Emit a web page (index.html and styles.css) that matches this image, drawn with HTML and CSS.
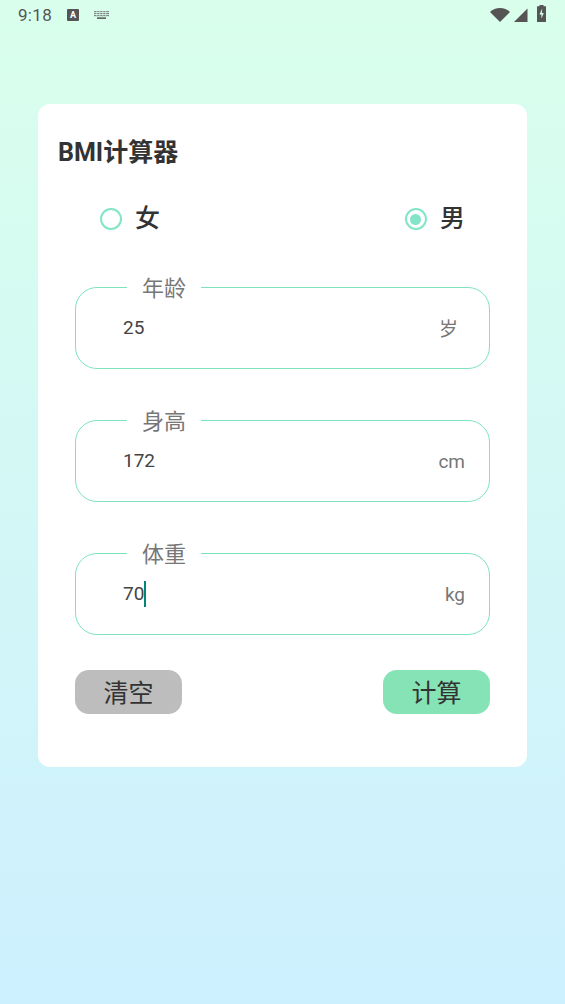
FILE: index.html
```html
<!DOCTYPE html>
<html lang="zh-CN">
<head>
    <meta charset="UTF-8">
    <meta name="viewport" content="width=device-width, initial-scale=1.0">
    <title>BMI计算器</title>
    <link rel="stylesheet" href="styles.css">
</head>
<body>
    <div class="status-bar">
        <div class="status-left">
            <span class="time">9:18</span>
            <span class="ime-badge">A</span>
            <svg class="keyboard-icon" width="15" height="8" viewBox="0 0 15 8">
                <g fill="#7d8a84">
                    <rect x="0" y="0" width="15" height="1.2"/>
                    <rect x="0" y="2" width="15" height="1.2"/>
                    <rect x="0" y="4" width="15" height="1.2"/>
                </g>
                <rect x="3" y="6.4" width="9" height="1.5" fill="#555"/>
                <g fill="#dafaee">
                    <rect x="2.5" y="0" width=".7" height="5.2"/>
                    <rect x="5.5" y="0" width=".7" height="5.2"/>
                    <rect x="8.5" y="0" width=".7" height="5.2"/>
                    <rect x="11.5" y="0" width=".7" height="5.2"/>
                </g>
            </svg>
        </div>
        <div class="status-right">
            <svg width="20" height="14" viewBox="0 0 20 14">
                <path d="M0 4C2.7 1.5 6.1 0 10 0s7.3 1.5 10 4L10 14z" fill="#555"/>
            </svg>
            <svg width="14" height="14" viewBox="0 0 14 14">
                <path d="M0 14L13.5 0.5V14z" fill="#555"/>
            </svg>
            <svg class="battery-icon" width="9" height="17" viewBox="0 0 9 17">
                <path d="M2.5 0h4v1.2H9V17H0V1.2h2.5z" fill="#555"/>
                <path d="M5.2 3.5L2.4 9.6h2v4l2.4-5.6H4.9z" fill="#dafaee"/>
            </svg>
        </div>
    </div>

    <main class="card">
        <h1 class="title">BMI计算器</h1>

        <div class="gender-row">
            <div class="gender-option">
                <span class="radio"></span>
                <span class="gender-text">女</span>
            </div>
            <div class="gender-option">
                <span class="radio checked"></span>
                <span class="gender-text">男</span>
            </div>
        </div>

        <fieldset class="field">
            <legend>年龄</legend>
            <span class="value">25</span>
            <span class="unit unit-cjk">岁</span>
        </fieldset>

        <fieldset class="field">
            <legend>身高</legend>
            <span class="value">172</span>
            <span class="unit">cm</span>
        </fieldset>

        <fieldset class="field">
            <legend>体重</legend>
            <span class="value">70<span class="caret"></span></span>
            <span class="unit">kg</span>
        </fieldset>

        <div class="button-row">
            <button class="btn btn-clear">清空</button>
            <button class="btn btn-calc">计算</button>
        </div>
    </main>
</body>
</html>
```

FILE: styles.css
```css
* {
    box-sizing: border-box;
}
html, body {
    height: 100%;
}
body {
    margin: 0;
    height: 1004px;
    overflow: hidden;
    background: linear-gradient(180deg, #d9ffec 0%, #cdf0ff 100%);
    font-family: Roboto, "Noto Sans CJK SC", sans-serif;
    color: #333;
}
.status-bar {
    height: 30px;
    padding: 6px 19px 0 18px;
    display: flex;
    justify-content: space-between;
    align-items: flex-start;
}
.status-left {
    display: flex;
    align-items: center;
    height: 19px;
}
.time {
    font-size: 17px;
    line-height: 19px;
    color: #555;
    letter-spacing: 0.3px;
}
.ime-badge {
    width: 12px;
    height: 12px;
    margin: -1px 0 0 15px;
    border-radius: 1px;
    background: #555;
    color: #fff;
    font-size: 9px;
    font-weight: 700;
    line-height: 12px;
    text-align: center;
}
.keyboard-icon {
    margin: -1px 0 0 15px;
}
.status-right {
    display: flex;
    align-items: flex-end;
    height: 16px;
    gap: 4px;
}
.battery-icon {
    margin-left: 5px;
}
.card {
    width: 489px;
    height: 663px;
    margin: 74px 0 0 38px;
    padding: 33px 37px 0 37px;
    background: #fff;
    border-radius: 12px;
}
.title {
    margin: 0 0 0 -17px;
    font-size: 25px;
    font-weight: 700;
    line-height: 32px;
    color: #333;
}
.gender-row {
    display: flex;
    justify-content: space-between;
    margin-top: 34px;
    padding: 0 25px;
}
.gender-option {
    display: flex;
    align-items: center;
    gap: 13px;
}
.radio {
    width: 22px;
    height: 22px;
    border: 2.5px solid #82e5c8;
    border-radius: 50%;
    display: flex;
    align-items: center;
    justify-content: center;
}
.radio.checked::after {
    content: "";
    width: 11px;
    height: 11px;
    border-radius: 50%;
    background: #82e5c8;
}
.gender-text {
    font-size: 25px;
    font-weight: 500;
    line-height: 32px;
}
.field {
    display: flex;
    justify-content: space-between;
    align-items: flex-start;
    height: 97px;
    margin: 36px 0 0 0;
    padding: 13px 24px 0 47px;
    min-width: 0;
    width: 415px;
    border: 1px solid #7fe3bb;
    border-radius: 22px;
}
.gender-row + .field {
    margin-top: 37px;
}
.field legend {
    margin-left: 4px;
    padding: 4px 15px 0 15px;
    font-size: 22px;
    line-height: 26px;
    color: #777;
}
.value {
    font-size: 19px;
    line-height: 26px;
    color: #444;
}
.caret {
    display: inline-block;
    width: 2px;
    height: 26px;
    vertical-align: -7px;
    background: #008577;
}
.unit {
    font-size: 19px;
    line-height: 26px;
    color: #777;
    margin-top: 1px;
}
.unit-cjk {
    margin: 2px 7px 0 0;
}
.button-row {
    display: flex;
    justify-content: space-between;
    width: 415px;
    margin-top: 35px;
}
.btn {
    width: 107px;
    height: 44px;
    padding: 4px 0 0 0;
    border: none;
    border-radius: 14px;
    font-family: inherit;
    font-size: 25px;
    line-height: 40px;
    color: #333;
}
.btn-clear {
    background: #bdbdbd;
}
.btn-calc {
    background: #86e3b6;
}
```
